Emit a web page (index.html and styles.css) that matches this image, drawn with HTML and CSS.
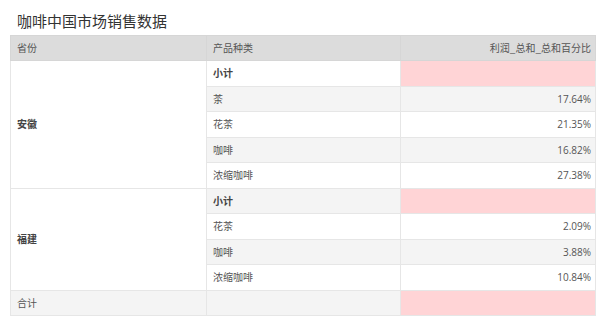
FILE: index.html
```html
<!DOCTYPE html>
<html lang="zh">
<head>
<meta charset="utf-8">
<link rel="stylesheet" href="styles.css">
</head>
<body>
<div class="page">
  <div class="title">咖啡中国市场销售数据</div>
  <table class="grid">
    <colgroup><col class="c1"><col class="c2"><col class="c3"></colgroup>
    <thead>
      <tr><th>省份</th><th>产品种类</th><th class="num">利润_总和_总和百分比</th></tr>
    </thead>
    <tbody>
      <tr><td rowspan="5" class="prov">安徽</td><td class="sub">小计</td><td class="num pink"></td></tr>
      <tr class="alt"><td>茶</td><td class="num">17.64%</td></tr>
      <tr><td>花茶</td><td class="num">21.35%</td></tr>
      <tr class="alt"><td>咖啡</td><td class="num">16.82%</td></tr>
      <tr><td>浓缩咖啡</td><td class="num">27.38%</td></tr>
      <tr class="alt"><td rowspan="4" class="prov">福建</td><td class="sub">小计</td><td class="num pink"></td></tr>
      <tr><td>花茶</td><td class="num">2.09%</td></tr>
      <tr class="alt"><td>咖啡</td><td class="num">3.88%</td></tr>
      <tr><td>浓缩咖啡</td><td class="num">10.84%</td></tr>
      <tr class="alt total"><td>合计</td><td></td><td class="num pink"></td></tr>
    </tbody>
  </table>
</div>
</body>
</html>
```

FILE: styles.css
```css
html, body {
  margin: 0;
  padding: 0;
  background: #ffffff;
}
.page {
  padding: 0 10px;
  font-family: "Noto Sans CJK SC", "Open Sans", sans-serif;
}
.title {
  height: 35px;
  box-sizing: border-box;
  padding: 10px 0 0 7px;
  font-size: 15px;
  line-height: 22px;
  color: #333333;
}
.grid {
  width: 585px;
  border-collapse: collapse;
  table-layout: fixed;
  font-size: 10px;
  color: #555555;
}
.c1 { width: 196px; }
.c2 { width: 194px; }
.c3 { width: 195px; }
.grid th, .grid td {
  border: 1px solid #e6e6e6;
  padding: 0 4px 0 6px;
  text-align: left;
  font-weight: normal;
  line-height: 14px;
  white-space: nowrap;
  background: #ffffff;
}
.grid thead tr { height: 25px; }
.grid thead th {
  background: #dcdcdc;
  border-color: #d6d6d6;
  color: #555555;
}
.grid tbody tr { height: 25.5px; }
.grid tr.alt td { background: #f4f4f4; }
.grid td.prov { background: #ffffff; font-weight: bold; color: #444444; }
.grid tr.alt td.prov { background: #ffffff; }
.grid .num { text-align: right; font-family: "Open Sans", "Noto Sans CJK SC", sans-serif; }
.grid thead th.num { font-family: "Noto Sans CJK SC", sans-serif; }
.grid td.sub { font-weight: bold; color: #444444; }
.grid td.pink, .grid tr.alt td.pink { background: #ffd4d6; }
```
